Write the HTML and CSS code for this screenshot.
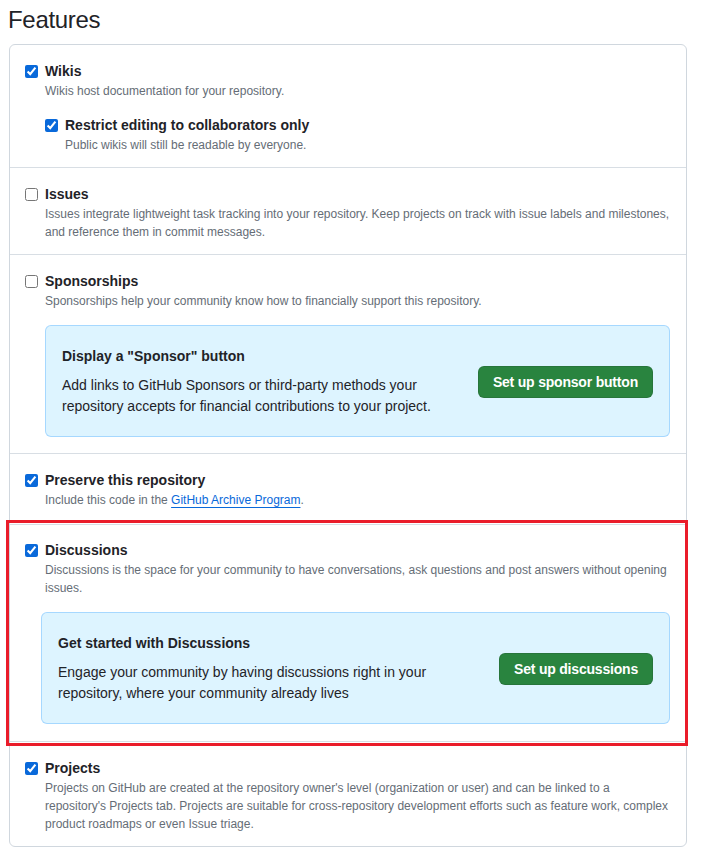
FILE: index.html
```html
<!DOCTYPE html>
<html lang="en">
<head>
<meta charset="utf-8">
<title>Features</title>
<link rel="stylesheet" href="styles.css">
</head>
<body>
<div class="page">
  <h2 class="page-title">Features</h2>
  <div class="box">
    <div class="row">
      <div class="check">
        <input type="checkbox" class="check-input" checked>
        <div class="check-body">
          <div class="check-title">Wikis</div>
          <p class="check-note">Wikis host documentation for your repository.</p>
          <div class="check check-nested">
            <input type="checkbox" class="check-input" checked>
            <div class="check-body">
              <div class="check-title">Restrict editing to collaborators only</div>
              <p class="check-note">Public wikis will still be readable by everyone.</p>
            </div>
          </div>
        </div>
      </div>
    </div>

    <div class="row">
      <div class="check">
        <input type="checkbox" class="check-input">
        <div class="check-body">
          <div class="check-title">Issues</div>
          <p class="check-note">Issues integrate lightweight task tracking into your repository. Keep projects on track with issue labels and milestones, and reference them in commit messages.</p>
        </div>
      </div>
    </div>

    <div class="row row-flash">
      <div class="check">
        <input type="checkbox" class="check-input">
        <div class="check-body">
          <div class="check-title">Sponsorships</div>
          <p class="check-note">Sponsorships help your community know how to financially support this repository.</p>
          <div class="flash flash-sponsor">
            <div class="flash-text">
              <div class="flash-title">Display a "Sponsor" button</div>
              <p class="flash-desc">Add links to GitHub Sponsors or third-party methods your repository accepts for financial contributions to your project.</p>
            </div>
            <button class="btn-primary" type="button">Set up sponsor button</button>
          </div>
        </div>
      </div>
    </div>

    <div class="row row-preserve">
      <div class="check">
        <input type="checkbox" class="check-input" checked>
        <div class="check-body">
          <div class="check-title">Preserve this repository</div>
          <p class="check-note">Include this code in the <a class="link" href="#">GitHub Archive Program</a>.</p>
        </div>
      </div>
    </div>

    <div class="row row-discussions">
      <div class="check">
        <input type="checkbox" class="check-input" checked>
        <div class="check-body">
          <div class="check-title">Discussions</div>
          <p class="check-note">Discussions is the space for your community to have conversations, ask questions and post answers without opening issues.</p>
          <div class="flash flash-discussions">
            <div class="flash-text">
              <div class="flash-title">Get started with Discussions</div>
              <p class="flash-desc">Engage your community by having discussions right in your repository, where your community already lives</p>
            </div>
            <button class="btn-primary" type="button">Set up discussions</button>
          </div>
        </div>
      </div>
      <div class="highlight"></div>
    </div>

    <div class="row row-last">
      <div class="check">
        <input type="checkbox" class="check-input" checked>
        <div class="check-body">
          <div class="check-title">Projects</div>
          <p class="check-note">Projects on GitHub are created at the repository owner's level (organization or user) and can be linked to a repository's Projects tab. Projects are suitable for cross-repository development efforts such as feature work, complex product roadmaps or even Issue triage.</p>
        </div>
      </div>
    </div>
  </div>
</div>
</body>
</html>
```

FILE: styles.css
```css
* { box-sizing: border-box; }

html, body {
  margin: 0;
  padding: 0;
  background: #ffffff;
}

body {
  font-family: "Liberation Sans", Arial, sans-serif;
  color: #1f2328;
  font-size: 14px;
}

.page {
  width: 706px;
  padding: 5px 19px 16px 9px;
}

.page-title {
  margin: 0 0 9px -1px;
  font-size: 24px;
  line-height: 30px;
  font-weight: 400;
  letter-spacing: -0.3px;
  color: #1f2328;
}

.box {
  border: 1px solid #d0d7de;
  border-radius: 6px;
}

.row {
  padding: 16px 16px 13px 15px;
  border-top: 1px solid #d8dee4;
}

.row:first-child {
  border-top: 0;
}

.row-flash {
  padding-bottom: 16px;
}

.row-preserve {
  padding-bottom: 15px;
}

.row-discussions {
  position: relative;
  padding-top: 15px;
  padding-bottom: 16px;
}

.check {
  display: flex;
  gap: 7px;
  align-items: flex-start;
}

.check-input {
  width: 13px;
  height: 13px;
  margin: 4px 0 0 0;
  flex: none;
  accent-color: #0969da;
}

.check-body {
  flex: 1;
  min-width: 0;
}

.check-title {
  font-size: 14px;
  line-height: 20px;
  font-weight: 700;
  color: #1f2328;
}

.check-note {
  margin: 1px 0 0 0;
  font-size: 12px;
  line-height: 18px;
  color: #656d76;
}

.check-nested {
  margin-top: 15px;
}

.link {
  color: #0969da;
  text-decoration: underline;
  text-underline-offset: 3px;
}

.flash {
  display: flex;
  align-items: center;
  justify-content: space-between;
  gap: 24px;
  padding: 20px 16px 19px;
  background: #ddf4ff;
  border: 1px solid rgba(84, 174, 255, 0.4);
  border-radius: 6px;
}

.flash-sponsor {
  margin-top: 15px;
}

.flash-discussions {
  margin-top: 15px;
  margin-bottom: 1px;
  margin-left: -4px;
}

.flash-text {
  flex: 1;
  max-width: 400px;
}

.flash-title {
  font-size: 14px;
  line-height: 21px;
  font-weight: 700;
  color: #1f2328;
}

.flash-desc {
  margin: 8px 0 0 0;
  font-size: 14px;
  line-height: 21px;
  color: #1f2328;
}

.btn-primary {
  flex: none;
  height: 32px;
  padding: 0 14px;
  font-family: inherit;
  font-size: 14px;
  font-weight: 700;
  letter-spacing: -0.2px;
  color: #ffffff;
  background: #29843f;
  border: 1px solid rgba(31, 35, 40, 0.15);
  border-radius: 6px;
}

.highlight {
  position: absolute;
  top: -5px;
  bottom: -5px;
  left: -4px;
  right: -2px;
  border: 3.5px solid #ea1c2a;
  pointer-events: none;
}
```
